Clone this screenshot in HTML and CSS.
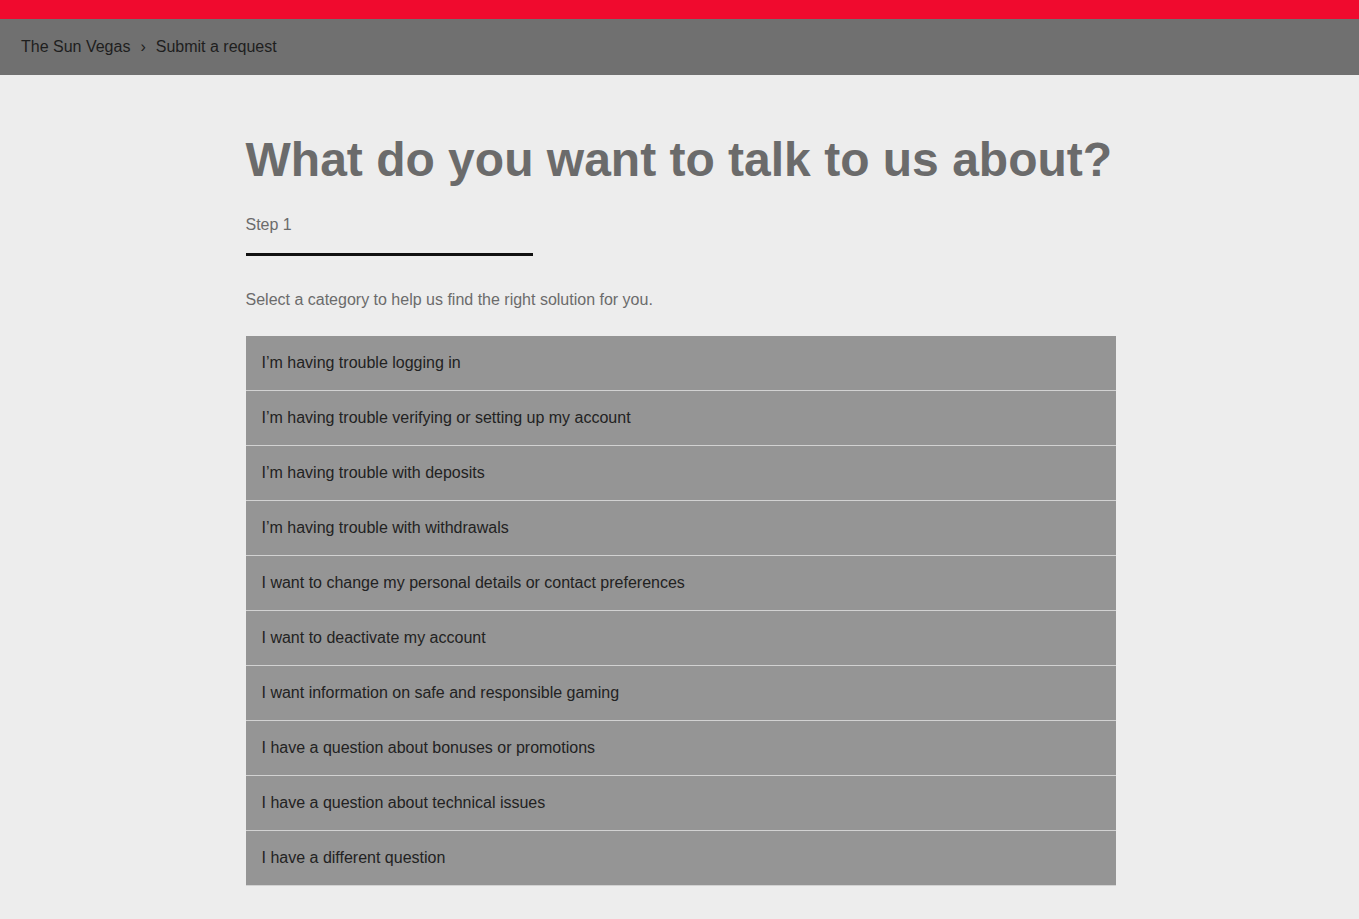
FILE: index.html
```html
<!DOCTYPE html>
<html lang="en">
<head>
<meta charset="utf-8">
<title>Submit a request – The Sun Vegas</title>
<link rel="stylesheet" href="styles.css">
</head>
<body>
<div class="brand-bar"></div>
<nav class="crumbs">
  <a href="#">The Sun Vegas</a>
  <span class="sep">›</span>
  <a href="#">Submit a request</a>
</nav>
<main class="page">
  <h1 class="title">What do you want to talk to us about?</h1>
  <div class="step">Step 1</div>
  <div class="step-line"></div>
  <p class="intro">Select a category to help us find the right solution for you.</p>
  <ul class="options">
    <li>I’m having trouble logging in</li>
    <li>I’m having trouble verifying or setting up my account</li>
    <li>I’m having trouble with deposits</li>
    <li>I’m having trouble with withdrawals</li>
    <li>I want to change my personal details or contact preferences</li>
    <li>I want to deactivate my account</li>
    <li>I want information on safe and responsible gaming</li>
    <li>I have a question about bonuses or promotions</li>
    <li>I have a question about technical issues</li>
    <li>I have a different question</li>
  </ul>
</main>
</body>
</html>
```
FILE: styles.css
```css
* { box-sizing: border-box; }

html, body {
  margin: 0;
  padding: 0;
  background: #ededed;
  font-family: "Liberation Sans", Arial, sans-serif;
}

.brand-bar {
  height: 19px;
  background: #f00a2e;
}

.crumbs {
  height: 56px;
  background: #707070;
  display: flex;
  align-items: center;
  padding-left: 21px;
  font-size: 16px;
  color: #1e1e1e;
}

.crumbs a {
  color: #1e1e1e;
  text-decoration: none;
}

.crumbs .sep {
  margin: 0 10px 0 10px;
  font-size: 16px;
}

.page {
  width: 870px;
  margin: 0 auto;
  padding-top: 55px;
  padding-bottom: 34px;
  position: relative;
  left: 1px;
}

.title {
  margin: 0;
  font-size: 48px;
  font-weight: 700;
  line-height: 60px;
  color: #6b6b6b;
}

.step {
  margin-top: 25px;
  font-size: 16px;
  line-height: 20px;
  color: #6b6b6b;
}

.step-line {
  margin-top: 18px;
  width: 287px;
  height: 3px;
  background: #111;
}

.intro {
  margin: 34px 0 0;
  font-size: 16px;
  line-height: 20px;
  color: #6b6b6b;
}

.options {
  list-style: none;
  margin: 26px 0 0;
  padding: 0;
}

.options li {
  height: 55px;
  display: flex;
  align-items: center;
  padding-left: 16px;
  background: #959595;
  border-bottom: 1px solid #d2d2d2;
  font-size: 16px;
  color: #222;
  cursor: pointer;
}
```
